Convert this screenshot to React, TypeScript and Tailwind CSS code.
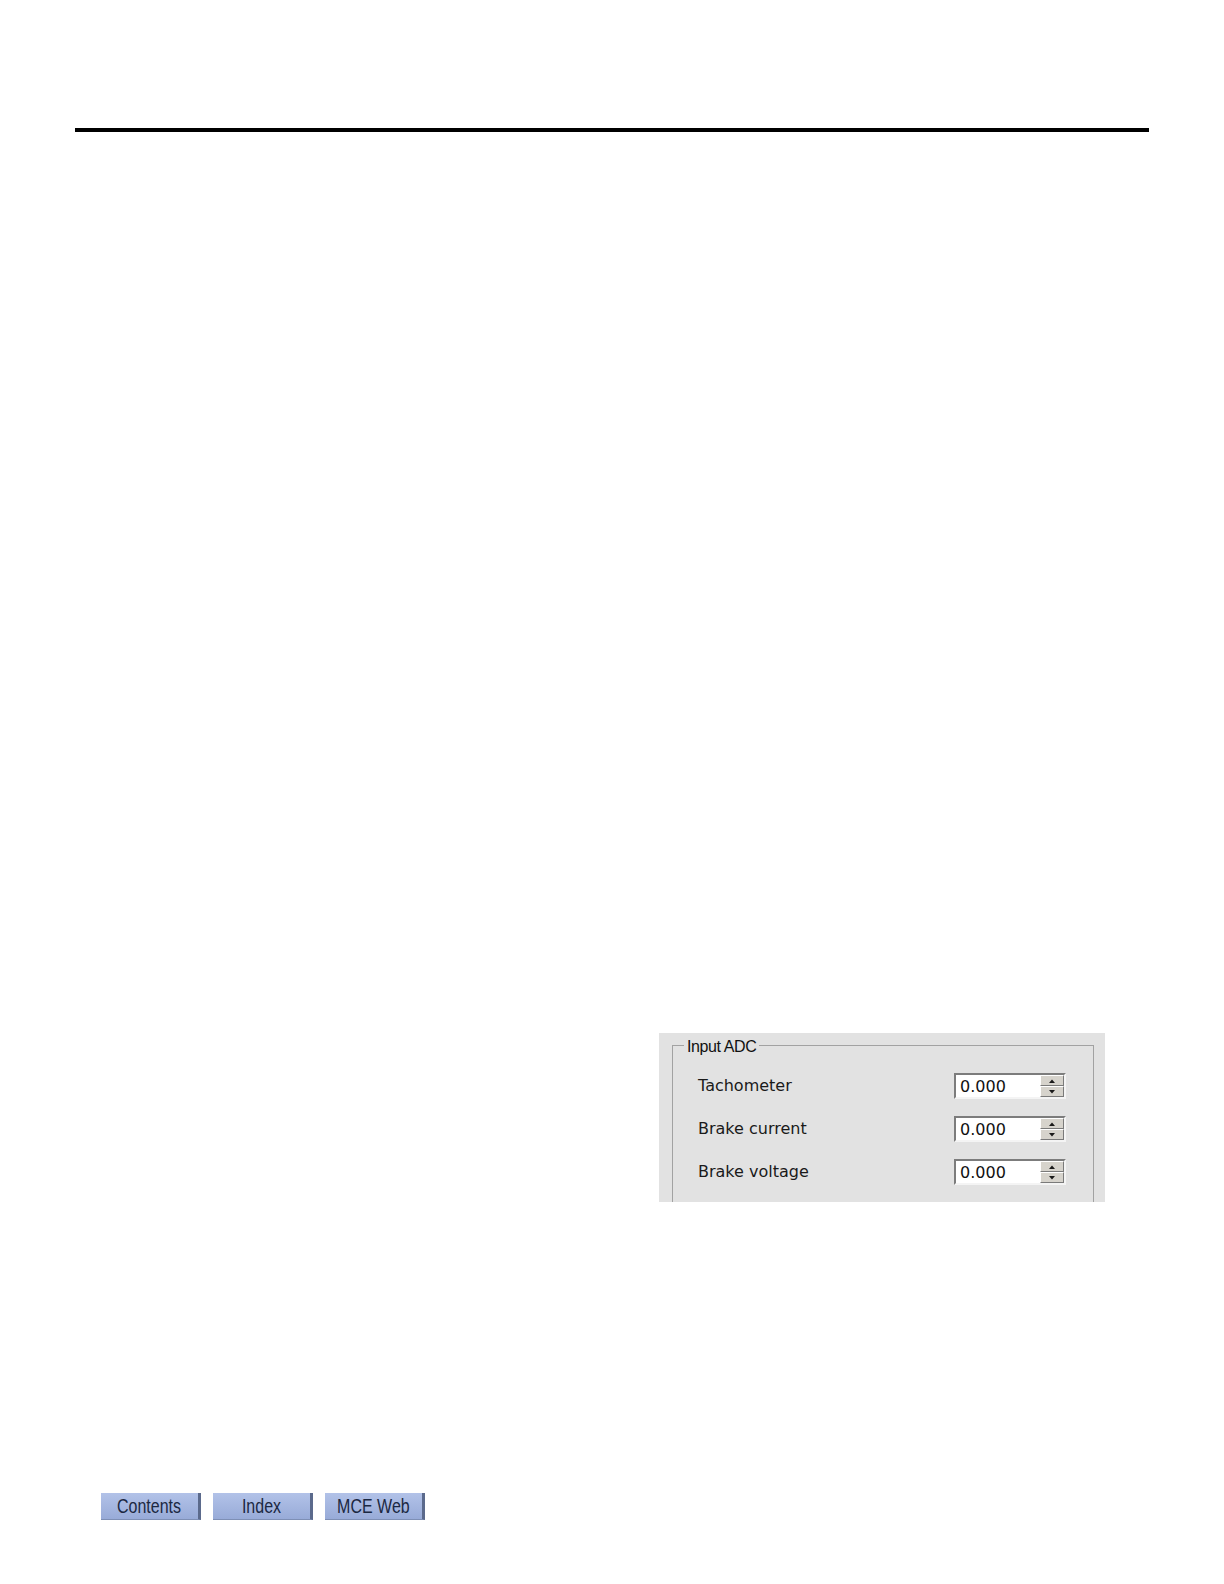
import React from "react";

const rows = ["Tachometer", "Brake current", "Brake voltage"];

const SpinBox: React.FC<{ value: string }> = ({ value }) => (
  <div className="flex h-[26px] w-[112px] border-2 border-t-[#7c7c7c] border-l-[#7c7c7c] border-r-[#f4f4f4] border-b-[#f4f4f4] bg-white">
    <div className="flex-1 pl-[4px] pt-[1px] text-[16px] leading-[22px] text-[#111] font-['DejaVu_Sans',sans-serif]">{value}</div>
    <div className="flex w-[24px] flex-col">
      <div className="flex flex-1 items-center justify-center border border-t-white border-l-white border-r-[#7a7a7a] border-b-[#7a7a7a] bg-[#d6d3cc]">
        <svg width="6" height="4" viewBox="0 0 6 4">
          <path d="M0 4 L3 0.5 L6 4 Z" fill="#1a1a1a" />
        </svg>
      </div>
      <div className="flex flex-1 items-center justify-center border border-t-white border-l-white border-r-[#7a7a7a] border-b-[#7a7a7a] bg-[#d6d3cc]">
        <svg width="6" height="4" viewBox="0 0 6 4">
          <path d="M0 0 L3 3.5 L6 0 Z" fill="#1a1a1a" />
        </svg>
      </div>
    </div>
  </div>
);

const NavButton: React.FC<{ label: string }> = ({ label }) => (
  <div className="flex h-[27px] w-[100px] items-center justify-center border-r-[3px] border-r-[#5b6a8c] border-b border-b-[#7e8fb5] bg-gradient-to-b from-[#b2c2e8] to-[#98abd8]">
    <span className="scale-x-[0.8] text-[20px] leading-none text-[#1b2842] font-['Liberation_Sans',Arial,sans-serif]">
      {label}
    </span>
  </div>
);

export default function App() {
  return (
    <div className="flex h-[1584px] w-[1224px] flex-col bg-white">
      <div className="px-[75px] pt-[128px]">
        <div className="h-[4px] bg-black" />
      </div>

      <div className="ml-[659px] mt-[901px] h-[169px] w-[446px] overflow-hidden bg-[#e2e2e2] pl-[13px] pr-[11px] pt-[2px]">
        <fieldset className="h-[200px] border border-[#a2a2a2] px-0 pb-0 pt-0">
          <legend className="ml-[11px] px-[3px] text-[16px] leading-[20px] tracking-[-0.4px] text-[#111] font-['Liberation_Sans',Arial,sans-serif]">
            <span className="relative top-[2px]">Input ADC</span>
          </legend>
          <div className="flex flex-col gap-[17px] pl-[25px] pt-[18px]">
            {rows.map((r) => (
              <div key={r} className="flex items-center">
                <div className="w-[256px] text-[16px] text-[#1a1a1a] font-['DejaVu_Sans',sans-serif]">{r}</div>
                <SpinBox value="0.000" />
              </div>
            ))}
          </div>
        </fieldset>
      </div>

      <div className="ml-[101px] mt-[291px] flex gap-[12px]">
        <NavButton label="Contents" />
        <NavButton label="Index" />
        <NavButton label="MCE Web" />
      </div>
    </div>
  );
}
